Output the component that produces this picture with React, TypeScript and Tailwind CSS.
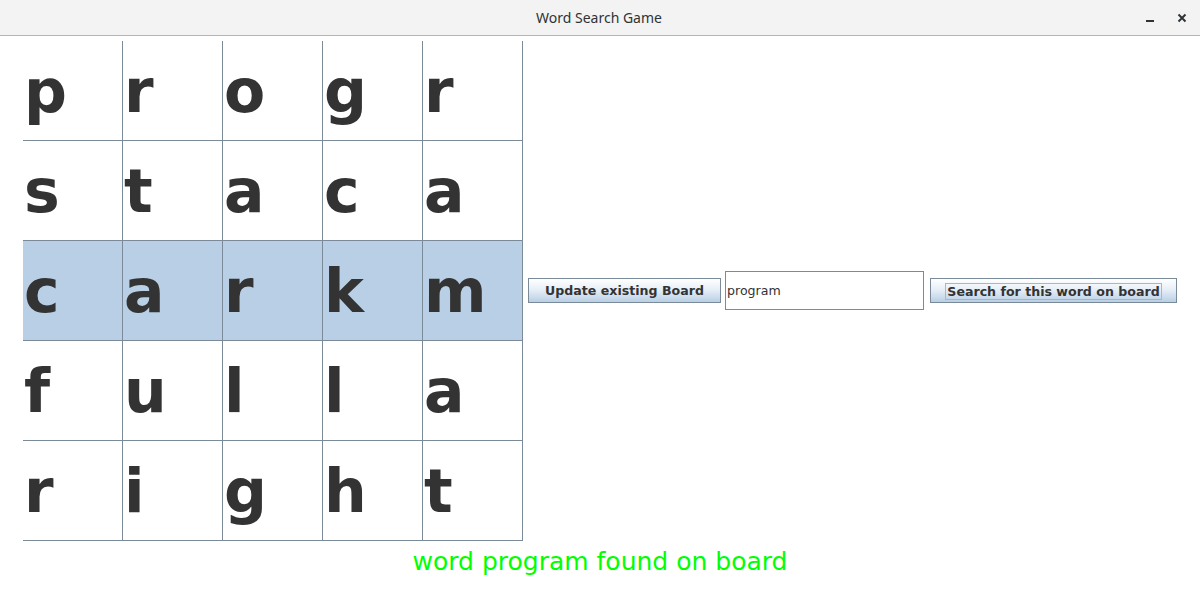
import React from 'react';

const board = [
  ['p', 'r', 'o', 'g', 'r'],
  ['s', 't', 'a', 'c', 'a'],
  ['c', 'a', 'r', 'k', 'm'],
  ['f', 'u', 'l', 'l', 'a'],
  ['r', 'i', 'g', 'h', 't'],
];

const highlightRow = 2;

export default function App() {
  return (
    <div className="w-[1200px] h-[611px] bg-white flex flex-col overflow-hidden" style={{ fontFamily: '"DejaVu Sans", sans-serif' }}>
      {/* title bar */}
      <div className="h-[36px] shrink-0 bg-[#f3f3f3] border-b border-[#b5b5b2] flex items-center relative">
        <div className="flex-1 text-center text-[14px] text-[#2e3436] pr-[2px]" style={{ fontFamily: '"Noto Sans", sans-serif' }}>
          Word Search Game
        </div>
        <div className="absolute right-[13px] top-0 h-[35px] flex items-center gap-[22px] text-[#2e3436]">
          <svg width="10" height="10" viewBox="0 0 10 10">
            <rect x="1" y="7" width="8" height="2" fill="#2e3436" />
          </svg>
          <svg width="10" height="10" viewBox="0 0 10 10">
            <path d="M1.5 1.5 L8.5 8.5 M8.5 1.5 L1.5 8.5" stroke="#2e3436" strokeWidth="2" />
          </svg>
        </div>
      </div>

      {/* main row */}
      <div className="flex items-start justify-center pt-[5px]">
        <div className="grid grid-cols-5 w-[500px]">
          {board.map((row, r) =>
            row.map((ch, c) => (
              <div
                key={`${r}-${c}`}
                className={`h-[100px] border-r border-b border-[#7a8a99] flex items-center pl-[1px] text-[60px] font-bold text-[#333333] ${
                  r === highlightRow ? 'bg-[#b8cfe5]' : 'bg-white'
                }`}
              >
                {ch}
              </div>
            ))
          )}
        </div>

        <button className="ml-[5px] mt-[237px] w-[193px] h-[25px] pt-[1px] border border-[#7a8a99] bg-gradient-to-b from-[#ffffff] via-[#e4edf6] to-[#b8cfe5] text-[12.6px] font-bold text-[#333333] flex items-center justify-center">
          Update existing Board
        </button>

        <div className="ml-[4px] mt-[230px] w-[199px] h-[39px] border border-[#7a8a99] bg-white flex items-center pl-[1px] pt-[1px] text-[12.6px] text-[#333333]">
          program
        </div>

        <button className="ml-[6px] mt-[237px] w-[247px] h-[25px] pt-[1px] border border-[#7a8a99] bg-gradient-to-b from-[#ffffff] via-[#e4edf6] to-[#b8cfe5] text-[12.6px] font-bold text-[#333333] flex items-center justify-center">
          <span className="border border-[#a3b8cc] px-[1px] leading-[15px]">Search for this word on board</span>
        </button>
      </div>

      <div className="text-center text-[25px] leading-[29px] text-[#00ff00] mt-[6px]">word program found on board</div>
    </div>
  );
}
